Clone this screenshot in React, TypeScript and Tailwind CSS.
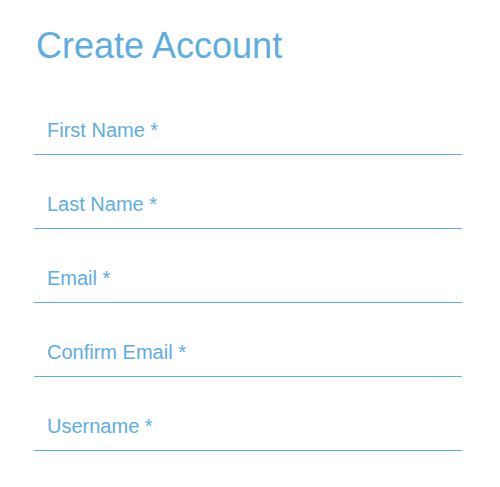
import React from 'react';

const fields = ['First Name *', 'Last Name *', 'Email *', 'Confirm Email *', 'Username *'];

export default function App() {
    return (
        <div className="w-[500px] h-[487px] bg-white pl-[34px]" style={{ fontFamily: '"Liberation Sans", Arial, sans-serif' }}>
            <h1 className="pt-[28px] mb-[17px] pl-[2px] text-[36px] leading-none text-[#5dade2] font-normal">Create Account</h1>
            <div className="w-[428px] flex flex-col">
                {fields.map(f => (
                    <div key={f} className="h-[74px] border-b border-[#5dade2] flex items-end pb-[14px] pl-[13px]">
                        <span className="text-[20px] leading-none text-[#5dade2]">{f}</span>
                    </div>
                ))}
            </div>
        </div>
    );
}
